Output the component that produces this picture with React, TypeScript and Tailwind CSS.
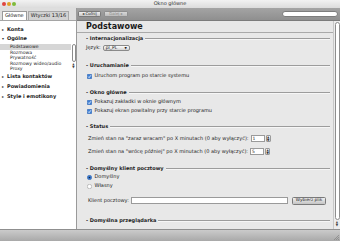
import React from 'react';

const font = { fontFamily: '"DejaVu Sans", "Liberation Sans", sans-serif' };

const Check: React.FC = () => (
  <svg width="5" height="5" viewBox="0 0 10 10" className="shrink-0">
    <rect x="0.5" y="0.5" width="9" height="9" rx="1.5" fill="#3d7fd6" stroke="#2a5da8" />
    <path d="M2.3 5.2 L4.2 7.3 L7.8 2.6" fill="none" stroke="#fff" strokeWidth="1.6" />
  </svg>
);

const Radio: React.FC<{ on?: boolean }> = ({ on }) => (
  <svg width="5" height="5" viewBox="0 0 10 10" className="shrink-0">
    <circle cx="5" cy="5" r="4.4" fill={on ? '#3d7fd6' : '#fff'} stroke={on ? '#2a5da8' : '#8a8a8a'} />
    {on && <circle cx="5" cy="5" r="1.7" fill="#10213d" />}
  </svg>
);

const Section: React.FC<{ title: string; className?: string }> = ({ title, className = '' }) => (
  <div className={`flex items-center h-[8px] ${className}`}>
    <span className="font-bold text-[5px] text-[#222] whitespace-nowrap">- {title}</span>
    <div className="flex-1 ml-[2px] h-[2px] border-t border-t-[#9c9c9c] border-b border-b-[#f6f6f6]" />
  </div>
);

const Spinner: React.FC<{ value: string }> = ({ value }) => (
  <div className="flex items-center ml-[2px]">
    <div className="w-[14px] h-[7px] bg-white border border-[#9a9a9a] text-[4.5px] leading-[5px] pl-[1px]">{value}</div>
    <div className="ml-[1px] w-[5px] h-[7px] rounded-[1px] bg-gradient-to-b from-[#fafafa] to-[#cfcfcf] border border-[#9a9a9a] flex flex-col items-center justify-center leading-none text-[3px] text-[#333]">
      <span>▲</span>
      <span>▼</span>
    </div>
  </div>
);

const Tree: React.FC<{ label: string; open?: boolean }> = ({ label, open }) => (
  <div className="flex items-center h-[8px] pl-[2px]">
    <span className="text-[4px] w-[5px] text-[#333]">{open ? '▾' : '▸'}</span>
    <span className="font-bold text-[5px] text-[#222]">{label}</span>
  </div>
);

export default function App() {
  const subItems = ['Podstawowe', 'Rozmowa', 'Prywatność', 'Rozmowy wideo/audio', 'Proxy'];
  return (
    <div style={font} className="w-[340px] h-[241px] flex flex-col overflow-hidden bg-[#e8e8e8] text-[#1c1c1c]">
      {/* title bar */}
      <div className="relative h-[8px] bg-gradient-to-b from-[#f2f2f2] to-[#dcdcdc] flex items-center">
        <div className="flex gap-[1.5px] pl-[2px]">
          <span className="w-[3.5px] h-[3.5px] rounded-full bg-[#e0453f]" />
          <span className="w-[3.5px] h-[3.5px] rounded-full bg-[#e0a026]" />
          <span className="w-[3.5px] h-[3.5px] rounded-full bg-[#7fbb3b]" />
        </div>
        <span className="absolute left-0 right-0 text-center text-[5px] text-[#333] leading-none top-[1px]">Okno główne</span>
      </div>

      <div className="flex flex-1 min-h-0">
        {/* left pane */}
        <div className="w-[77px] flex flex-col bg-white border-r border-[#9a9a9a]">
          <div className="h-[13px] bg-[#dedede] border-b border-[#a5a5a5] flex items-end pl-[2px] gap-[1px]">
            <div className="h-[9px] px-[2px] bg-white border border-b-0 border-[#9a9a9a] text-[5px] flex items-center">Główne</div>
            <div className="h-[9px] px-[2px] bg-[#d2d2d2] border border-b-0 border-[#a8a8a8] text-[5px] flex items-center">Wtyczki 13/16</div>
          </div>
          <div className="pt-[5px]">
            <Tree label="Konta" />
            <div className="mt-[1px]"><Tree label="Ogólne" open /></div>
            <div className="flex h-[28px] overflow-hidden mt-[0px]">
              <div className="flex-1 pt-[1px]">
                {subItems.map((s, i) => (
                  <div
                    key={s}
                    className={`h-[5.6px] pl-[10px] text-[4.6px] leading-[5.6px] whitespace-nowrap ${i === 0 ? 'bg-[#d6d6d6]' : ''}`}
                  >
                    {s}
                  </div>
                ))}
              </div>
              <div className="w-[5px] flex flex-col items-center pt-[1px]">
                <div className="w-[4px] h-[18px] rounded-full bg-white border border-[#8c8c8c]" />
                <div className="flex flex-col leading-none text-[3px] text-[#444] mt-[1px]">
                  <span>▲</span>
                  <span>▼</span>
                </div>
              </div>
            </div>
            <div className="mt-[2px]"><Tree label="Lista kontaktów" /></div>
            <div className="mt-[2px]"><Tree label="Powiadomienia" /></div>
            <div className="mt-[2px]"><Tree label="Style i emotikony" /></div>
          </div>
        </div>

        {/* right side */}
        <div className="flex-1 flex flex-col min-w-0">
          <div className="h-[13px] bg-gradient-to-b from-[#a4a4a4] to-[#8f8f8f] border-b border-[#7c7c7c] flex items-center pl-[1px] pr-[2px]">
            <div className="w-[23px] h-[6px] rounded-[1.5px] bg-gradient-to-b from-[#f0f0f0] to-[#c8c8c8] border border-[#7a7a7a] text-[4px] flex items-center justify-center text-[#222]">◂ Cofnij</div>
            <div className="ml-[3px] w-[24px] h-[6px] rounded-[1.5px] bg-gradient-to-b from-[#d8d8d8] to-[#bcbcbc] border border-[#8f8f8f] text-[4px] flex items-center justify-center text-[#8a8a8a]">Dalej ▸</div>
            <div className="flex-1" />
            <div className="w-[56px] h-[6.5px] rounded-full bg-white border border-[#7d7d7d]" />
          </div>

          <div className="flex-1 flex min-h-0">
            <div className="flex-1 flex flex-col min-w-0 overflow-hidden">
              <div className="h-[12px] flex items-center pl-[9px] border-b border-[#a9a9a9]">
                <span className="font-bold text-[8px] text-[#1a1a1a] leading-none">Podstawowe</span>
              </div>
              <div className="pl-[9px] pr-[3px] text-[5px] flex flex-col">
                <Section title="Internacjonalizacja" className="mt-[2px]" />
                <div className="flex items-center h-[8px] mt-[1px]">
                  <span>Język:</span>
                  <div className="ml-[2px] w-[27px] h-[6.5px] rounded-[2px] bg-gradient-to-b from-[#fdfdfd] to-[#d2d2d2] border border-[#8a8a8a] flex items-center justify-between px-[2px] text-[4.5px]">
                    <span>pl_PL</span>
                    <span className="text-[3px]">▼</span>
                  </div>
                </div>

                <Section title="Uruchamianie" className="mt-[10px]" />
                <div className="flex items-center h-[8px] mt-[2px] gap-[2.5px] pl-[1px]">
                  <Check />
                  <span>Uruchom program po starcie systemu</span>
                </div>

                <Section title="Okno główne" className="mt-[9px]" />
                <div className="flex items-center h-[8px] mt-[1px] gap-[2.5px] pl-[1px]">
                  <Check />
                  <span>Pokazuj zakładki w oknie głównym</span>
                </div>
                <div className="flex items-center h-[8px] mt-[1px] gap-[2.5px] pl-[1px]">
                  <Check />
                  <span>Pokazuj ekran powitalny przy starcie programu</span>
                </div>

                <Section title="Status" className="mt-[8px]" />
                <div className="flex items-center h-[9px] mt-[3px] pl-[2px]">
                  <span className="whitespace-nowrap">Zmień stan na "zaraz wracam" po X minutach (0 aby wyłączyć):</span>
                  <Spinner value="1" />
                </div>
                <div className="flex items-center h-[9px] mt-[4px] pl-[2px]">
                  <span className="whitespace-nowrap">Zmień stan na "wrócę później" po X minutach (0 aby wyłączyć):</span>
                  <Spinner value="5" />
                </div>

                <Section title="Domyślny klient pocztowy" className="mt-[9px]" />
                <div className="flex items-center h-[8px] gap-[2.5px] pl-[1px]">
                  <Radio on />
                  <span>Domyślny</span>
                </div>
                <div className="flex items-center h-[8px] mt-[1px] gap-[2.5px] pl-[1px]">
                  <Radio />
                  <span>Własny</span>
                </div>
                <div className="flex items-center h-[9px] mt-[6px] pl-[2px] pr-[4px]">
                  <span className="whitespace-nowrap">Klient pocztowy:</span>
                  <div className="ml-[2px] flex-1 h-[7px] bg-white border border-[#9a9a9a]" />
                  <div className="ml-[4px] w-[34px] h-[8px] rounded-[1.5px] bg-gradient-to-b from-[#f0f0f0] to-[#c4c4c4] border border-[#7a7a7a] text-[4.3px] flex items-center justify-center whitespace-nowrap">Wybierz plik</div>
                </div>

                <Section title="Domyślna przeglądarka" className="mt-[12px]" />
              </div>
            </div>

            {/* scrollbar */}
            <div className="w-[7px] bg-[#ececec] border-l border-[#c8c8c8] flex flex-col items-center py-[1px]">
              <div className="w-[5px] flex-1 rounded-full bg-white border border-[#8e8e8e]" />
              <div className="flex flex-col leading-none text-[3px] text-[#444] mt-[1px] mb-[1px]">
                <span>▲</span>
                <span>▼</span>
              </div>
            </div>
          </div>
        </div>
      </div>

      {/* bottom bar */}
      <div className="relative h-[12px] bg-gradient-to-b from-[#cbcbcb] to-[#a9a9a9] border-t border-[#8f8f8f]">
        <svg width="6" height="6" viewBox="0 0 6 6" className="absolute right-[1px] bottom-[1px]">
          <path d="M1 6 L6 1 M3 6 L6 3 M5 6 L6 5" stroke="#7a7a7a" strokeWidth="0.6" />
        </svg>
      </div>
    </div>
  );
}
